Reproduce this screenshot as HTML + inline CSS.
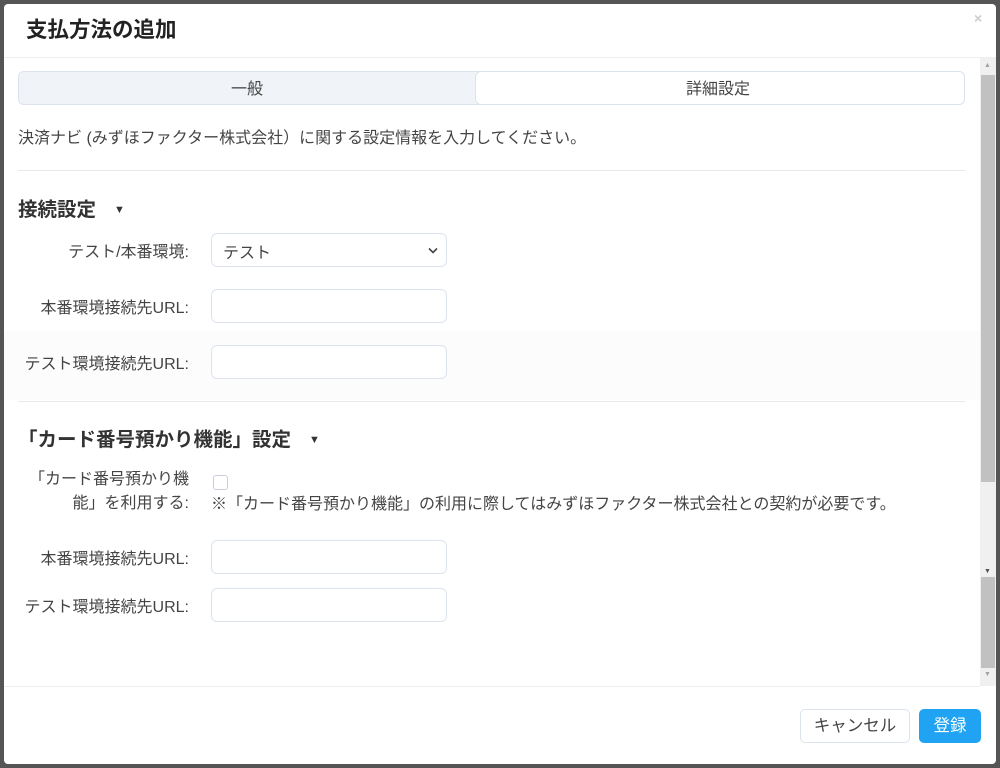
<!DOCTYPE html>
<html><head><meta charset="utf-8"><style>
*{box-sizing:border-box;margin:0;padding:0}
body{width:1000px;height:768px;background:#555;font-family:"Liberation Sans","Noto Sans CJK JP",sans-serif;color:#444;position:relative;overflow:hidden}
.m{position:absolute;left:4px;top:4px;width:992px;height:760px;background:#fff;border-radius:4px;overflow:hidden}
.a{position:absolute}
.t{font-size:16px;white-space:nowrap}
.in{position:absolute;left:207px;width:236px;height:34px;border:1px solid #dde3ee;border-radius:6px;background:#fff}
.lab{position:absolute;right:807px;font-size:16px;white-space:nowrap;text-align:right;color:#444}
.hr{position:absolute;left:14px;width:947px;height:1px;background:#e8e8e8}
</style></head><body>
<div class="m">
 <div class="a" style="left:22px;top:9px;font-size:21.5px;font-weight:bold;color:#222">支払方法の追加</div>
 <div class="a" style="left:970px;top:6px;font-size:14px;color:#ccc;font-weight:bold">×</div>
 <div class="a" style="left:0;top:53px;width:992px;height:1px;background:#eee"></div>
 <div class="a" style="left:0;top:682px;width:976px;height:1px;background:#eee"></div>
 <div class="a" style="left:14px;top:67px;width:947px;height:34px;border:1px solid #dde3ee;border-radius:6px;background:#f0f4f9"></div>
 <div class="a" style="left:471px;top:67px;width:490px;height:34px;border:1px solid #dde3ee;border-radius:6px;background:#fff"></div>
 <div class="a t" style="left:227px;top:71px">一般</div>
 <div class="a t" style="left:682px;top:71px">詳細設定</div>
 <div class="a t" style="left:14px;top:120px">決済ナビ (みずほファクター株式会社）に関する設定情報を入力してください。</div>
 <div class="hr" style="top:166px"></div>
 <div class="a" style="left:14px;top:189px;font-size:19.5px;font-weight:bold;color:#333">接続設定<span style="font-size:11px;margin-left:18px;vertical-align:3px">▼</span></div>
 <div class="lab" style="top:234px">テスト/本番環境:</div>
 <div class="in" style="top:229px"><span class="t" style="position:absolute;left:11px;top:5px">テスト</span><svg style="position:absolute;right:8px;top:13px" width="10" height="7" viewBox="0 0 10 7"><path d="M1 1.5 5 5.5 9 1.5" fill="none" stroke="#444" stroke-width="1.6"/></svg></div>
 <div class="lab" style="top:290px">本番環境接続先URL:</div>
 <div class="in" style="top:285px"></div>
 <div class="a" style="left:0;top:326px;width:976px;height:70px;background:#fcfcfc"></div>
 <div class="lab" style="top:346px">テスト環境接続先URL:</div>
 <div class="in" style="top:341px"></div>
 <div class="hr" style="top:397px"></div>
 <div class="a" style="left:14px;top:419px;font-size:19.5px;font-weight:bold;color:#333">「カード番号預かり機能」設定<span style="font-size:11px;margin-left:18px;vertical-align:3px">▼</span></div>
 <div class="lab" style="top:464px;line-height:24px">「カード番号預かり機<br>能」を利用する:</div>
 <div class="a" style="left:209px;top:471px;width:15px;height:15px;border:1px solid #c8cfdb;border-radius:3px"></div>
 <div class="a t" style="left:207px;top:486px">※「カード番号預かり機能」の利用に際してはみずほファクター株式会社との契約が必要です。</div>
 <div class="lab" style="top:541px">本番環境接続先URL:</div>
 <div class="in" style="top:536px"></div>
 <div class="lab" style="top:589px">テスト環境接続先URL:</div>
 <div class="in" style="top:584px"></div>
 <div class="a" style="left:976px;top:54px;width:16px;height:628px;background:#f0f0f0"></div>
 <div class="a" style="left:977px;top:71px;width:14px;height:407px;background:#c1c1c1"></div>
 <div class="a" style="left:977px;top:573px;width:14px;height:91px;background:#c1c1c1"></div>
 <div class="a" style="left:980px;top:58px;font-size:7px;color:#a3a3a3">▲</div>
 <div class="a" style="left:980px;top:564px;font-size:7px;color:#505050">▼</div>
 <div class="a" style="left:980px;top:667px;font-size:7px;color:#a3a3a3">▼</div>
 <div class="a" style="left:796px;top:705px;width:110px;height:34px;border:1px solid #dde3ee;border-radius:5px;background:#fff;text-align:center;line-height:32px;font-size:16.5px">キャンセル</div>
 <div class="a" style="left:915px;top:705px;width:62px;height:34px;border-radius:5px;background:#1fa3f2;color:#fff;text-align:center;line-height:34px;font-size:16.5px">登録</div>
</div>
</body></html>
